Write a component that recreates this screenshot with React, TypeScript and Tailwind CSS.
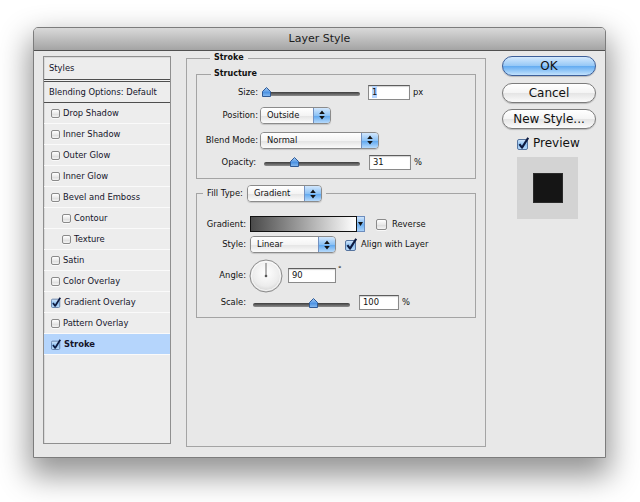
import React from "react";

type CheckProps = { checked?: boolean; big?: boolean };

const Check = ({ checked = false, big = false }: CheckProps) => {
  const size = big ? 12 : 10;
  if (!checked) {
    return (
      <span
        className={`${big ? "w-[11px] h-[11px]" : "w-[9px] h-[9px]"} block shrink-0 rounded-[2px] border border-[#8a8a8a] bg-[linear-gradient(#ffffff,#e9e9e9_50%,#dadada_51%,#f4f4f4)] shadow-[0_1px_0_rgba(255,255,255,0.7)]`}
      />
    );
  }
  return (
    <svg width={size} height={size + 1} viewBox="0 0 12 13" className="shrink-0">
      <defs>
        <linearGradient id="cbfill" x1="0" y1="0" x2="0" y2="1">
          <stop offset="0" stopColor="#d6e8fb" />
          <stop offset="0.5" stopColor="#8ec1f1" />
          <stop offset="1" stopColor="#bcdcfb" />
        </linearGradient>
      </defs>
      <rect x="0.5" y="2.5" width="10" height="10" rx="1.5" fill="url(#cbfill)" stroke="#56749f" />
      <path d="M2.4 7.2 L5 10.6 L11.2 0.8" fill="none" stroke="#0d1a40" strokeWidth="2.1" strokeLinejoin="round" />
    </svg>
  );
};

const Arrows = () => (
  <svg width="6" height="10" viewBox="0 0 6 10">
    <path d="M3 0.5 L5.8 4 L0.2 4 Z M3 9.5 L5.8 6 L0.2 6 Z" fill="#141414" />
  </svg>
);

const Popup = ({ label, className }: { label: string; className: string }) => (
  <div className={`flex h-[17px] shrink-0 overflow-hidden rounded-[4px] border border-[#8b8b8b] shadow-[0_1px_1px_rgba(0,0,0,0.15)] ${className}`}>
    <div className="flex flex-1 items-center pl-[6px] text-[8.4px] text-[#111] bg-[linear-gradient(#ffffff,#f4f4f4_50%,#e3e3e3_51%,#fbfbfb)]">
      {label}
    </div>
    <div className="flex w-[17px] items-center justify-center border-l border-[#7391c0] bg-[linear-gradient(#d2e7fd,#8cc2f5_50%,#5aa5ef_51%,#b7dafb)]">
      <Arrows />
    </div>
  </div>
);

const Slider = ({ className, thumb }: { className: string; thumb: string }) => (
  <div className={`relative h-[10px] shrink-0 ${className}`}>
    <div className="absolute bottom-[1px] left-0 right-0 h-[4px] rounded-full bg-[linear-gradient(#3d3d3d,#8e8e8e)]" />
    <svg width="9" height="10" viewBox="0 0 9 10" className={`absolute top-0 ${thumb}`}>
      <defs>
        <linearGradient id="thumbfill" x1="0" y1="0" x2="0" y2="1">
          <stop offset="0" stopColor="#a9cdf4" />
          <stop offset="0.55" stopColor="#4d93e3" />
          <stop offset="1" stopColor="#8bbdf0" />
        </linearGradient>
      </defs>
      <path d="M0.5 4.5 L4.5 0.5 L8.5 4.5 L8.5 9.5 L0.5 9.5 Z" fill="url(#thumbfill)" stroke="#2f5a96" />
    </svg>
  </div>
);

const Field = ({ value, className, selected = false }: { value: string; className: string; selected?: boolean }) => (
  <div className={`flex h-[15px] shrink-0 items-center border border-[#8a8a8a] border-t-[#5e5e5e] bg-white pl-[3px] text-[8.4px] text-[#111] shadow-[inset_0_1px_1px_rgba(0,0,0,0.18)] ${className}`}>
    <span className={selected ? "bg-[#b5d5ff]" : ""}>{value}</span>
  </div>
);

const styles = [
  { label: "Drop Shadow" },
  { label: "Inner Shadow" },
  { label: "Outer Glow" },
  { label: "Inner Glow" },
  { label: "Bevel and Emboss" },
  { label: "Contour", sub: true },
  { label: "Texture", sub: true },
  { label: "Satin" },
  { label: "Color Overlay" },
  { label: "Gradient Overlay", checked: true },
  { label: "Pattern Overlay" },
  { label: "Stroke", checked: true, active: true },
];

const StyleList = () => (
  <div className="mt-[5px] h-[388px] w-[128px] shrink-0 border border-[#8f8f8f] bg-[#ededed] text-[8.4px] text-[#14142a] shadow-[inset_1px_1px_0_rgba(0,0,0,0.08)]">
    <div className="flex h-[22px] items-center pl-[5px]">Styles</div>
    <div className="h-[3px] border-y border-[#4e4e4e] bg-[#f2f2f2]" />
    <div className="flex h-[21px] items-center border-b border-[#4e4e4e] pl-[5px]">Blending Options: Default</div>
    {styles.map((s) => (
      <div
        key={s.label}
        className={`flex h-[21px] items-center gap-[3px] border-b border-[#fafafa] ${s.sub ? "pl-[18px]" : "pl-[7px]"} ${s.active ? "bg-[#b5d5fc] font-bold" : ""}`}
      >
        <Check checked={s.checked} />
        <span>{s.label}</span>
      </div>
    ))}
  </div>
);

const StrokePanel = () => (
  <fieldset className="ml-[15px] mt-[1px] h-[395px] w-[300px] shrink-0 border border-[#a4a4a4] px-[9px] pt-[4px] text-[8.4px] text-[#111]">
    <legend className="ml-[14px] px-[4px] text-[8px] font-bold leading-[12px]">Stroke</legend>

    <fieldset className="border border-[#a4a4a4] pb-[7px]">
      <legend className="ml-[14px] px-[3px] text-[8px] font-bold leading-[12px]">Structure</legend>
      <div className="mt-[3px] flex h-[18px] items-center">
        <span className="w-[61px] text-right">Size:</span>
        <Slider className="ml-[4px] w-[98px]" thumb="left-0" />
        <Field value="1" selected className="ml-[8px] w-[42px]" />
        <span className="ml-[3px]">px</span>
      </div>
      <div className="mt-[5px] flex h-[18px] items-center">
        <span className="w-[61px] text-right">Position:</span>
        <Popup label="Outside" className="ml-[2px] w-[71px]" />
      </div>
      <div className="mt-[7px] flex h-[18px] items-center">
        <span className="w-[61px] text-right">Blend Mode:</span>
        <Popup label="Normal" className="ml-[2px] w-[119px]" />
      </div>
      <div className="mt-[4px] flex h-[18px] items-center">
        <span className="w-[59px] text-right">Opacity:</span>
        <Slider className="ml-[8px] w-[96px]" thumb="left-[26px]" />
        <Field value="31" className="ml-[9px] w-[42px]" />
        <span className="ml-[3px]">%</span>
      </div>
    </fieldset>

    <fieldset className="mt-[6px] border border-[#a4a4a4] pb-[7px]">
      <legend className="ml-[6px] flex items-center px-[4px]">
        <span>Fill Type:</span>
        <Popup label="Gradient" className="ml-[4px] w-[75px]" />
      </legend>
      <div className="mt-[14px] flex h-[16px] items-center">
        <span className="w-[49px] text-right">Gradient:</span>
        <div className="ml-[4px] flex h-[16px]">
          <div className="w-[107px] border border-[#111] bg-[linear-gradient(90deg,#4a4a4a,#9a9a9a_45%,#ffffff)]" />
          <div className="flex w-[8px] items-center justify-center border border-l-0 border-[#6d8dbd] bg-[linear-gradient(#cfe5fc,#6fb1f2_55%,#a9d2fa)]">
            <svg width="5" height="4" viewBox="0 0 5 4">
              <path d="M0 0 L5 0 L2.5 4 Z" fill="#111" />
            </svg>
          </div>
        </div>
        <span className="ml-[11px] flex">
          <Check big />
        </span>
        <span className="ml-[5px]">Reverse</span>
      </div>
      <div className="mt-[4px] flex h-[17px] items-center">
        <span className="w-[49px] text-right">Style:</span>
        <Popup label="Linear" className="ml-[4px] w-[86px]" />
        <span className="ml-[9px] flex">
          <Check checked big />
        </span>
        <span className="ml-[4px]">Align with Layer</span>
      </div>
      <div className="mt-[6px] flex h-[33px] items-center">
        <span className="w-[49px] text-right">Angle:</span>
        <svg width="34" height="34" viewBox="0 0 34 34" className="ml-[3px]">
          <defs>
            <radialGradient id="dial" cx="0.5" cy="0.4" r="0.6">
              <stop offset="0" stopColor="#ffffff" />
              <stop offset="0.7" stopColor="#ececec" />
              <stop offset="1" stopColor="#d2d2d2" />
            </radialGradient>
          </defs>
          <circle cx="17" cy="17" r="16" fill="url(#dial)" stroke="#8c8c8c" />
          <circle cx="17" cy="17" r="14.5" fill="none" stroke="#ffffff" strokeOpacity="0.7" />
          <line x1="17" y1="17" x2="17" y2="4" stroke="#6a6a6a" strokeWidth="1" />
          <circle cx="17" cy="17" r="1.3" fill="#555" />
        </svg>
        <Field value="90" className="ml-[5px] w-[48px]" />
        <span className="ml-[2px] mb-[12px] text-[7px]">°</span>
      </div>
      <div className="mt-[3px] flex h-[15px] items-center">
        <span className="w-[49px] text-right">Scale:</span>
        <Slider className="ml-[7px] w-[97px]" thumb="left-[56px]" />
        <Field value="100" className="ml-[9px] w-[40px]" />
        <span className="ml-[3px]">%</span>
      </div>
    </fieldset>
  </fieldset>
);

const Button = ({ label, primary = false }: { label: string; primary?: boolean }) => (
  <div
    className={`flex h-[20px] w-[94px] items-center justify-center rounded-full border text-[12px] text-[#111] shadow-[0_1px_1px_rgba(0,0,0,0.2)] ${
      primary
        ? "border-[#3d5f99] bg-[linear-gradient(#d4e9fd,#94c7f6_50%,#62abf1_51%,#c2e2fd)]"
        : "border-[#7c7c7c] bg-[linear-gradient(#ffffff,#f4f4f4_50%,#e4e4e4_51%,#fbfbfb)]"
    }`}
  >
    {label}
  </div>
);

const RightColumn = () => (
  <div className="ml-[16px] mt-[5px] flex w-[94px] shrink-0 flex-col">
    <Button label="OK" primary />
    <div className="mt-[7px]">
      <Button label="Cancel" />
    </div>
    <div className="mt-[6px]">
      <Button label="New Style..." />
    </div>
    <div className="mt-[7px] flex h-[14px] items-center gap-[4px] pl-[15px] text-[12px] text-[#111]">
      <Check checked big />
      <span>Preview</span>
    </div>
    <div className="ml-[15px] mt-[7px] flex h-[62px] w-[61px] items-center justify-center bg-[#d3d3d3]">
      <div className="h-[30px] w-[30px] border border-[#2a2a2a] bg-[#151515]" />
    </div>
  </div>
);

export default function App() {
  return (
    <div className="h-[502px] w-[640px] overflow-hidden bg-white pl-[33px] pt-[27px] font-['DejaVu_Sans',sans-serif]">
      <div className="flex h-[431px] w-[573px] flex-col rounded-t-[5px] border border-[#7c7c7c] bg-[#e8e8e8] shadow-[0_14px_30px_4px_rgba(0,0,0,0.42)]">
        <div className="flex h-[23px] shrink-0 items-center justify-center rounded-t-[4px] border-b border-[#505050] bg-[linear-gradient(#d9d9d9,#a4a4a4)] text-[11px] text-[#1c1c1c]">
          Layer Style
        </div>
        <div className="flex flex-1 items-start pl-[9px]">
          <StyleList />
          <StrokePanel />
          <RightColumn />
        </div>
      </div>
    </div>
  );
}
